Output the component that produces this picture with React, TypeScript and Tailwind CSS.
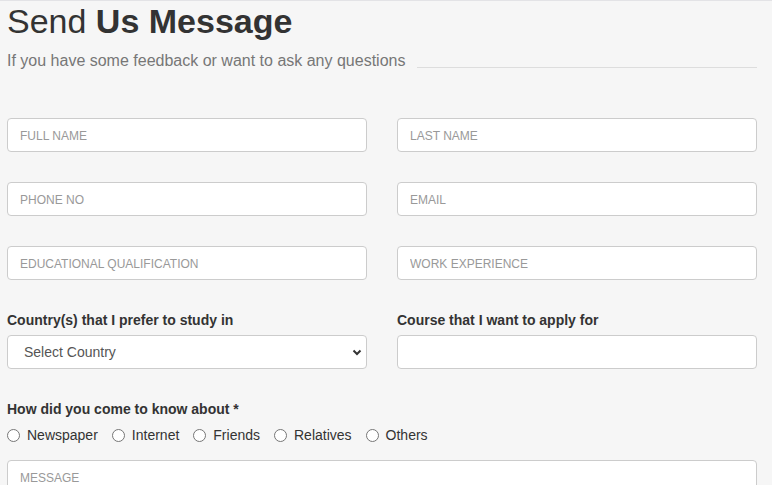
import { useState } from "react"

const sources = ["Newspaper", "Internet", "Friends", "Relatives", "Others"]

function Field({ placeholder }: { placeholder: string }) {
    return (
        <input
            type="text"
            placeholder={placeholder}
            className="h-[34px] w-full rounded-[4px] border border-[#cccccc] bg-white px-3 pt-[2px] text-[12px] text-[#555] placeholder:text-[#999] outline-none"
        />
    )
}

export default function App() {
    const [source, setSource] = useState<string>("")

    return (
        <div className="min-h-screen w-full border-t border-[#e3e3e6] bg-[#f6f6f6] pl-[7px] pr-[15px] pt-[3px] font-['Liberation_Sans',Arial,sans-serif] text-[#333]">
            <h2 className="text-[34px] leading-[34px] text-[#333]">
                Send <span className="font-bold">Us Message</span>
            </h2>
            <div className="mt-[11px] flex items-start">
                <p className="text-[16px] leading-[24px] text-[#777]">If you have some feedback or want to ask any questions</p>
                <div className="ml-[12px] mt-[18px] flex-1 border-t border-[#dddddd]"></div>
            </div>

            <form className="mt-[45px]">
                <div className="grid grid-cols-2 gap-x-[30px] gap-y-[30px]">
                    <Field placeholder="FULL NAME" />
                    <Field placeholder="LAST NAME" />
                    <Field placeholder="PHONE NO" />
                    <Field placeholder="EMAIL" />
                    <Field placeholder="EDUCATIONAL QUALIFICATION" />
                    <Field placeholder="WORK EXPERIENCE" />
                </div>

                <div className="mt-[31px] grid grid-cols-2 gap-x-[30px]">
                    <div>
                        <label className="mb-[6px] block text-[14px] font-bold leading-[18px]">Country(s) that I prefer to study in</label>
                        <div className="relative">
                            <select className="h-[34px] w-full appearance-none rounded-[4px] border border-[#cccccc] bg-white pl-4 text-[14px] text-[#555] outline-none">
                                <option>Select Country</option>
                                <option>Canada</option>
                                <option>Australia</option>
                                <option>United Kingdom</option>
                            </select>
                            <svg className="pointer-events-none absolute right-[5px] top-[14px]" width="10" height="7" viewBox="0 0 10 7">
                                <path d="M1.5 1.5 L5 5 L8.5 1.5" fill="none" stroke="#333" strokeWidth="2" />
                            </svg>
                        </div>
                    </div>
                    <div>
                        <label className="mb-[6px] block text-[14px] font-bold leading-[18px]">Course that I want to apply for</label>
                        <input type="text" className="h-[34px] w-full rounded-[4px] border border-[#cccccc] bg-white px-3 text-[14px] outline-none" />
                    </div>
                </div>

                <label className="mt-[31px] block text-[14px] font-bold leading-[18px]">How did you come to know about *</label>
                <div className="mt-[7px] flex items-center text-[14px] leading-[20px]">
                    {sources.map(s => (
                        <label key={s} className="mr-[14px] flex cursor-pointer items-center" onClick={() => setSource(s)}>
                            <span className="mr-[7px] flex h-[13px] w-[13px] items-center justify-center rounded-full border border-[#767676] bg-white">
                                {source === s && <span className="h-[7px] w-[7px] rounded-full bg-[#0075ff]"></span>}
                            </span>
                            {s}
                        </label>
                    ))}
                </div>

                <textarea
                    placeholder="MESSAGE"
                    className="mt-[15px] block h-[120px] w-full resize-none rounded-[4px] border border-[#cccccc] bg-white px-3 py-[8px] text-[12px] placeholder:text-[#999] outline-none"
                />
            </form>
        </div>
    )
}
